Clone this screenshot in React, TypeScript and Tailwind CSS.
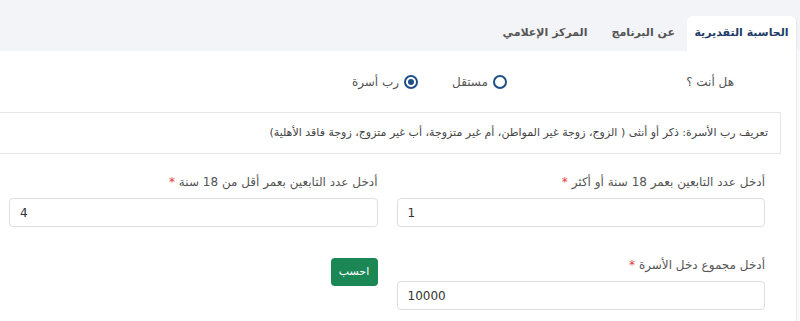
import { useState } from 'react';

const tabs = ['الحاسبة التقديرية', 'عن البرنامج', 'المركز الإعلامي'];

const Radio = ({ label, checked, onClick }: { label: string; checked: boolean; onClick: () => void }) => (
  <button type="button" onClick={onClick} className="flex items-center gap-[5px] text-[12px] text-[#555]">
    <span className="w-[14px] h-[14px] rounded-full border-2 border-[#1d4f86] flex items-center justify-center">
      {checked && <span className="w-[6px] h-[6px] rounded-full bg-[#1d4f86]" />}
    </span>
    <span>{label}</span>
  </button>
);

const Field = ({ label, value }: { label: string; value: string }) => (
  <div className="flex flex-col">
    <label className="text-[12px] text-[#555] leading-[16px] h-[16px] mb-[8px]">
      {label} <span className="text-[#e03a3a]">*</span>
    </label>
    <input
      defaultValue={value}
      className="h-[29px] w-full rounded-[4px] border border-[#dcdfe4] bg-white px-[10px] text-[12px] text-[#333] outline-none"
      dir="ltr"
    />
  </div>
);

export default function App() {
  const [kind, setKind] = useState('family');

  return (
    <div dir="rtl" className="w-[800px] h-[321px] overflow-hidden bg-[#fbfbfc]" style={{ fontFamily: '"DejaVu Sans", "Noto Sans", sans-serif' }}>
      {/* Tabs */}
      <div className="h-[51px] bg-[#f3f4f8] flex items-end pr-[3px]">
        {tabs.map((t, i) => (
          <div
            key={t}
            className={
              i === 0
                ? 'h-[35px] w-[110px] flex items-center justify-center rounded-t-[6px] bg-white border-r border-[#e6e8ec] text-[11px] font-semibold text-[#1f3c66]'
                : 'h-[35px] px-[12px] flex items-center text-[11px] font-semibold text-[#555]'
            }
          >
            {t}
          </div>
        ))}
      </div>

      {/* Panel */}
      <div className="w-[797px] h-[270px] mr-[3px] bg-white border-r border-[#e6e8ec]">
        <div className="flex items-center h-[61px]">
          <div className="w-[108px] pr-[62px] text-[12px] text-[#555] whitespace-nowrap">هل أنت ؟</div>
          <div className="flex items-center gap-[34px] mr-[181px]">
            <Radio label="مستقل" checked={kind === 'single'} onClick={() => setKind('single')} />
            <Radio label="رب أسرة" checked={kind === 'family'} onClick={() => setKind('family')} />
          </div>
        </div>

        <div className="ml-[-20px] mr-[15px] h-[42px] border border-[#e4e6ea] px-[12px] flex items-center text-[11px] text-[#444] whitespace-nowrap">
          تعريف رب الأسرة: ذكر أو أنثى ( الزوج، زوجة غير المواطن، أم غير متزوجة، أب غير متزوج، زوجة فاقد الأهلية)
        </div>

        <div className="mr-[31px] ml-[9px] mt-[20px] grid grid-cols-2 gap-x-[19px] gap-y-[32px]">
          <Field label="أدخل عدد التابعين بعمر 18 سنة أو أكثر" value="1" />
          <Field label="أدخل عدد التابعين بعمر أقل من 18 سنة" value="4" />
          <div className="-mt-[2px]">
            <Field label="أدخل مجموع دخل الأسرة" value="10000" />
          </div>
          <div className="mt-[-1px]">
            <button type="button" className="h-[28px] w-[47px] rounded-[4px] bg-[#1b8754] text-white text-[11px] font-medium">
              احسب
            </button>
          </div>
        </div>
      </div>
    </div>
  );
}
